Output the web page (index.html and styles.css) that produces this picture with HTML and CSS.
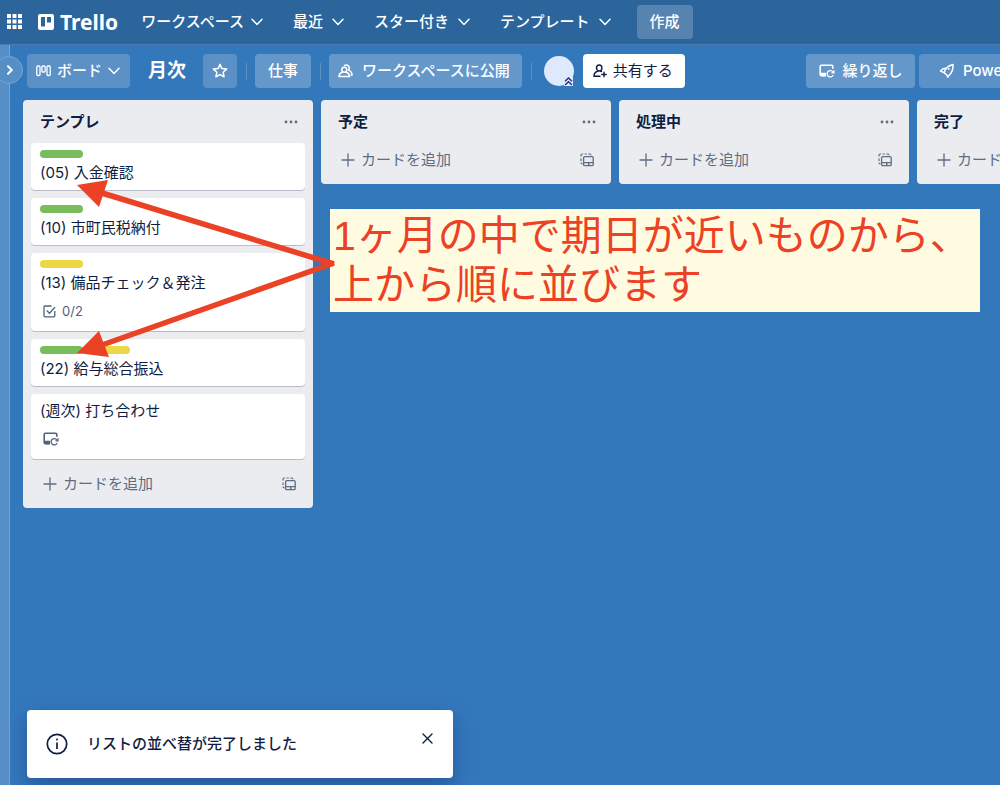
FILE: index.html
```html
<!DOCTYPE html>
<html lang="ja">
<head>
<meta charset="utf-8">
<meta name="viewport" content="width=device-width, initial-scale=1">
<title>月次 | Trello</title>
<link rel="stylesheet" href="styles.css">
</head>
<body>
<svg class="defs" aria-hidden="true">
  <symbol id="chevron" viewBox="0 0 12 8"><path d="M1 1.2 6 6.4l5-5.2" fill="none" stroke="currentColor" stroke-width="1.5" stroke-linecap="round" stroke-linejoin="round"/></symbol>
  <symbol id="dots" viewBox="0 0 14 4"><circle cx="2" cy="2" r="1.4"/><circle cx="7" cy="2" r="1.4"/><circle cx="12" cy="2" r="1.4"/></symbol>
  <symbol id="plus" viewBox="0 0 14 14"><path d="M7 1v12M1 7h12" fill="none" stroke="currentColor" stroke-width="1.3" stroke-linecap="round"/></symbol>
  <symbol id="template" viewBox="0 0 14 14"><path d="M2.500 10.800H2.200Q1 10.800 1 9.500M1 5.500v2.400M1 3.600V2.300Q1 1 2.300 1h.8M4.600 1h2.200M8.200 1h1.600q1.200 0 1.200 1.200" fill="none" stroke="currentColor" stroke-width="1.200"/><rect x="3.600" y="3.600" width="9.600" height="9" rx="1.200" fill="none" stroke="currentColor" stroke-width="1.300"/><path d="M4 9h9v1.300H4zM8 9.500h1.500v3H8z" fill="currentColor"/></symbol>
  <symbol id="repeat" viewBox="0 0 16 14"><path d="M13.800 4.800V2.500Q13.800 1.200 12.500 1.200H2.600Q1.200 1.200 1.200 2.600v7.600q0 1.500 1.500 1.500H7" fill="none" stroke="currentColor" stroke-width="1.600"/><path d="M1.500 8.800H7v3.500H2.500z" fill="currentColor"/><path d="M13.900 7.900a3.200 3.200 0 1 0 .3 3.200M15 6.300v2.500h-2.600" fill="none" stroke="currentColor" stroke-width="1.300"/></symbol>
</svg>

<header class="topbar">
  <button class="plain" aria-label="アプリ">
    <svg width="15" height="15" viewBox="0 0 15 15" fill="currentColor"><path d="M0 0h4v4H0zM5.500 0h4v4h-4zM11 0h4v4h-4zM0 5.500h4v4H0zM5.500 5.500h4v4h-4zM11 5.500h4v4h-4zM0 11h4v4H0zM5.500 11h4v4h-4zM11 11h4v4h-4z"/></svg>
  </button>
  <a class="logo" href="#">
    <svg width="16" height="16" viewBox="0 0 16 16"><path fill="currentColor" fill-rule="evenodd" d="M2 0h12a2 2 0 0 1 2 2v12a2 2 0 0 1-2 2H2a2 2 0 0 1-2-2V2a2 2 0 0 1 2-2Zm1 3v9.500h4V3ZM9 3v5.500h4V3Z"/></svg>
    <span>Trello</span>
  </a>
  <nav class="nav">
    <button class="plain nav-item nav-item-tight">ワークスペース<svg class="chevron"><use href="#chevron"/></svg></button>
    <button class="plain nav-item">最近<svg class="chevron"><use href="#chevron"/></svg></button>
    <button class="plain nav-item">スター付き<svg class="chevron"><use href="#chevron"/></svg></button>
    <button class="plain nav-item">テンプレート<svg class="chevron"><use href="#chevron"/></svg></button>
  </nav>
  <button class="btn create">作成</button>
</header>

<div class="workspace">
  <aside class="rail">
    <button class="rail-toggle" aria-label="サイドバーを開く"><svg width="6" height="10" viewBox="0 0 6 10"><path d="M1 1.200 4.800 5 1 8.800" fill="none" stroke="currentColor" stroke-width="2" stroke-linecap="round" stroke-linejoin="round"/></svg></button>
  </aside>
  <main class="board">
    <div class="board-bar">
      <button class="btn view"><svg width="15" height="12" viewBox="0 0 15 12" fill="none" stroke="currentColor" stroke-width="1.300"><rect x=".8" y="1" width="3.200" height="9.500" rx="1"/><rect x="5.900" y="1" width="3.200" height="6" rx="1"/><rect x="11" y="1" width="3.200" height="9.500" rx="1"/></svg>ボード<svg class="chevron"><use href="#chevron"/></svg></button>
      <h1 class="board-title">月次</h1>
      <button class="btn star" aria-label="スター"><svg width="16" height="16" viewBox="0 0 16 16"><path d="m8 1.400 1.900 4.200 4.700.5-3.500 3.100 1 4.600L8 11.500l-4.100 2.300 1-4.600L1.400 6.100l4.700-.5Z" fill="none" stroke="currentColor" stroke-width="1.500" stroke-linejoin="round"/></svg></button>
      <span class="divider"></span>
      <button class="btn team">仕事</button>
      <span class="divider"></span>
      <button class="btn visibility"><svg width="16" height="14" viewBox="0 0 16 14" fill="none" stroke="currentColor" stroke-width="1.500" stroke-linecap="round"><circle cx="6.300" cy="5.800" r="2.500"/><path d="M4.600 8.200Q1 8.800 1 12.600h10.500q0-3.800-3.600-4.400"/><path d="M6.500 1.500Q8.800.2 10.500 2q1.600 2.200.2 4.400 3.300 1 3.300 4.600h-1"/></svg>ワークスペースに公開</button>
      <span class="divider"></span>
      <span class="avatar"><svg class="avatar-badge" width="9" height="9" viewBox="0 0 9 9"><path d="M1 4.300 4.500 1 8 4.300M1 8l3.500-3.300L8 8" fill="none" stroke="currentColor" stroke-width="1.300"/></svg></span>
      <button class="btn share"><svg width="14" height="14" viewBox="0 0 14 14" fill="none" stroke="currentColor" stroke-width="1.400" stroke-linecap="round"><ellipse cx="6.200" cy="4" rx="2.700" ry="3"/><path d="M4.800 7.200Q1 8 1 12.300h6M7.600 7.200l1 .4M11 8.300v4.400M8.800 10.500h4.400"/></svg>共有する</button>
      <div class="board-tools">
        <button class="btn repeat"><svg width="16" height="14"><use href="#repeat"/></svg>繰り返し</button>
        <button class="btn power"><svg width="16" height="16" viewBox="0 0 16 16" fill="none" stroke="currentColor" stroke-width="1.500" stroke-linejoin="round" stroke-linecap="round"><path d="M5 9.700Q6.500 3.500 14 1.500q.5 7-4 10.800L8.800 14.200 7.900 12 5 9.700 1.500 8 4 5.700l3-.4"/><path d="m9.500 6.200.6-.5"/></svg>Power-Up</button>
      </div>
    </div>

    <div class="lists">
      <section class="list">
        <header class="list-head"><h2>テンプレ</h2><button class="plain" aria-label="メニュー"><svg class="dots"><use href="#dots"/></svg></button></header>
        <article class="card"><div class="labels"><i class="label green"></i></div><p>(05) 入金確認</p></article>
        <article class="card"><div class="labels"><i class="label green"></i></div><p>(10) 市町民税納付</p></article>
        <article class="card"><div class="labels"><i class="label yellow"></i></div><p>(13) 備品チェック＆発注</p><div class="badges"><svg width="13" height="13" viewBox="0 0 13 13" fill="none" stroke="currentColor" stroke-width="1.300"><path d="M8.500 1H2Q1 1 1 2v8.800q0 1 1 1h8.800q1 0 1-1V6"/><path d="m3.800 5.500 2.700 2.800L12 2.300"/></svg><span>0/2</span></div></article>
        <article class="card"><div class="labels"><i class="label green"></i><i class="label yellow"></i></div><p>(22) 給与総合振込</p></article>
        <article class="card"><p>(週次) 打ち合わせ</p><div class="badges"><svg width="16" height="14"><use href="#repeat"/></svg></div></article>
        <footer class="list-foot"><button class="plain add"><svg class="plus"><use href="#plus"/></svg>カードを追加</button><button class="plain" aria-label="テンプレートから作成"><svg class="template"><use href="#template"/></svg></button></footer>
      </section>
      <section class="list">
        <header class="list-head"><h2>予定</h2><button class="plain" aria-label="メニュー"><svg class="dots"><use href="#dots"/></svg></button></header>
        <footer class="list-foot"><button class="plain add"><svg class="plus"><use href="#plus"/></svg>カードを追加</button><button class="plain" aria-label="テンプレートから作成"><svg class="template"><use href="#template"/></svg></button></footer>
      </section>
      <section class="list">
        <header class="list-head"><h2>処理中</h2><button class="plain" aria-label="メニュー"><svg class="dots"><use href="#dots"/></svg></button></header>
        <footer class="list-foot"><button class="plain add"><svg class="plus"><use href="#plus"/></svg>カードを追加</button><button class="plain" aria-label="テンプレートから作成"><svg class="template"><use href="#template"/></svg></button></footer>
      </section>
      <section class="list">
        <header class="list-head"><h2>完了</h2><button class="plain" aria-label="メニュー"><svg class="dots"><use href="#dots"/></svg></button></header>
        <footer class="list-foot"><button class="plain add"><svg class="plus"><use href="#plus"/></svg>カードを追加</button><button class="plain" aria-label="テンプレートから作成"><svg class="template"><use href="#template"/></svg></button></footer>
      </section>
    </div>
  </main>
</div>

<p class="note">1ヶ月の中で期日が近いものから、<br>上から順に並びます</p>
<svg class="arrows" width="340" height="400" viewBox="0 0 340 400" aria-hidden="true">
  <path d="M334 264 102 193M334 263 102 345" stroke="#eb4124" stroke-width="5.500" fill="none"/>
  <path d="m77 185 31-5-9 27ZM77 353l22-22 10 26Z" fill="#eb4124"/>
</svg>

<div class="toast" role="status">
  <svg width="22" height="22" viewBox="0 0 22 22" fill="none" stroke="currentColor"><circle cx="11" cy="11" r="9.700" stroke-width="1.700"/><path d="M11 9.500v6.500" stroke-width="1.700"/><circle cx="11" cy="6.500" r="1" fill="currentColor" stroke="none"/></svg>
  <span>リストの並べ替が完了しました</span>
  <button class="plain toast-close" aria-label="閉じる"><svg width="11" height="11" viewBox="0 0 11 11"><path d="m1 1 9 9m0-9-9 9" stroke="currentColor" stroke-width="1.400" stroke-linecap="round"/></svg></button>
</div>
</body>
</html>
```
FILE: styles.css
```css
* { box-sizing: border-box; }

body {
  margin: 0;
  min-height: 100vh;
  display: flex;
  flex-direction: column;
  position: relative;
  overflow: hidden;
  background: #3478bc;
  color: #101d42;
  font: 15px/20px Inter, "Noto Sans CJK JP", sans-serif;
}

h1, h2, p { margin: 0; }
svg { display: block; flex: none; }
.defs { position: absolute; width: 0; height: 0; }

button { font: inherit; color: inherit; border: 0; cursor: pointer; white-space: nowrap; }
.plain { display: flex; align-items: center; padding: 0; background: none; }

.chevron { width: 12px; height: 8px; }
.dots { width: 14px; height: 4px; fill: currentColor; }
.plus { width: 14px; height: 14px; }
.template { width: 14px; height: 14px; }

.topbar {
  display: flex;
  align-items: center;
  height: 45px;
  padding: 0 7px 1px;
  background: #2c659c;
  border-bottom: 1px solid #4a7bae;
  color: #fff;
}
.logo {
  display: flex;
  align-items: center;
  gap: 6px;
  margin: 0 23px 0 16px;
  color: #fff;
  text-decoration: none;
  font: 700 21px/24px "Noto Sans", sans-serif;
}
.nav { display: flex; gap: 30px; margin-right: 26px; }
.nav-item { gap: 9px; font-weight: 500; }
.nav-item-tight { gap: 7px; }

.btn {
  display: flex;
  flex: none;
  align-items: center;
  justify-content: center;
  gap: 8px;
  height: 34px;
  padding: 0 13px;
  border-radius: 4px;
  background: #6498cb;
  color: #fff;
  font-weight: 500;
}
.create { background: #5783b0; }

.workspace { display: flex; flex: 1; }
.rail { position: relative; flex: none; width: 10px; background: #568fc6; border-right: 1px solid #75a4d3; }
.rail-toggle {
  position: absolute;
  top: 11px;
  left: -5px;
  display: flex;
  align-items: center;
  justify-content: center;
  width: 28px;
  height: 28px;
  padding: 0 0 0 2px;
  border: 1px solid #75a4d3;
  border-radius: 50%;
  background: #568fc6;
  color: #fff;
}

.board { flex: 1; min-width: 0; overflow: hidden; }
.board-bar { display: flex; align-items: center; padding: 9px 0 12px 17px; }
.view { gap: 6px; padding: 0 10px 0 9px; background: #5b91c7; }
.board-title { padding: 0 17px 0 18px; color: #fff; font-size: 19px; line-height: 30px; white-space: nowrap; }
.star { width: 34px; padding: 0; background: #5b91c7; }
.divider { flex: none; width: 1px; height: 17px; margin: 0 8px 0 9px; background: #5b91c7; }
.visibility { padding: 0 12px 0 9px; }
.avatar { position: relative; flex: none; width: 30px; height: 30px; margin: 0 9px 0 4px; border-radius: 50%; background: #dfe9fd; }
.avatar-badge { position: absolute; right: 1px; bottom: 0; background: #dfe9fd; color: #202a80; }
.share { gap: 6px; padding: 0 12px 0 10px; background: #fff; color: #101d42; font-weight: 400; }
.board-tools { display: flex; flex: none; gap: 4px; width: 194px; margin-left: auto; overflow: hidden; }
.repeat { width: 109px; }
.power { padding: 0 20px; background: #5b91c7; }

.lists { display: flex; align-items: flex-start; gap: 8px; padding-left: 13px; }
.list {
  display: flex;
  flex: none;
  flex-direction: column;
  gap: 8px;
  width: 290px;
  padding: 0 8px 7px;
  border-radius: 4px;
  background: #ebecf0;
}
.list-head {
  display: flex;
  align-items: center;
  justify-content: space-between;
  height: 43px;
  margin-bottom: -8px;
  padding: 0 7px 0 9px;
  color: #5e6c84;
}
.list-head h2 { color: #101d42; font-size: 15px; line-height: 20px; }
.card { padding: 7px 9px; border-radius: 4px; background: #fff; box-shadow: 0 1px 0 #b9bdc9; }
.labels { display: flex; gap: 4px; margin-bottom: 5px; }
.label { width: 43px; height: 8px; border-radius: 4px; }
.green { background: #79bc5c; }
.yellow { background: #eed744; }
.badges {
  display: flex;
  align-items: center;
  gap: 6px;
  height: 20px;
  margin: 8px 3px 3px;
  color: #52617d;
  font-size: 13px;
}
.list-foot {
  display: flex;
  align-items: center;
  justify-content: space-between;
  height: 34px;
  padding: 0 9px 0 12px;
  color: #5e6c84;
}
.add { gap: 6px; }

.note {
  position: absolute;
  top: 209px;
  left: 330px;
  right: 20px;
  padding: 3px 3px 2px;
  background: #fffbe1;
  color: #eb4124;
  font: 400 41px/49px "Liberation Sans", "Noto Sans CJK JP", sans-serif;
  white-space: nowrap;
}
.arrows { position: absolute; top: 0; left: 0; pointer-events: none; }

.toast {
  position: absolute;
  left: 27px;
  bottom: 7px;
  display: flex;
  align-items: center;
  gap: 19px;
  width: 426px;
  padding: 23px 20px 23px 19px;
  border-radius: 4px;
  background: #fff;
  box-shadow: 0 8px 20px rgba(9, 30, 90, .35);
  font-weight: 500;
}
.toast-close { align-self: flex-start; margin-left: auto; }
```
